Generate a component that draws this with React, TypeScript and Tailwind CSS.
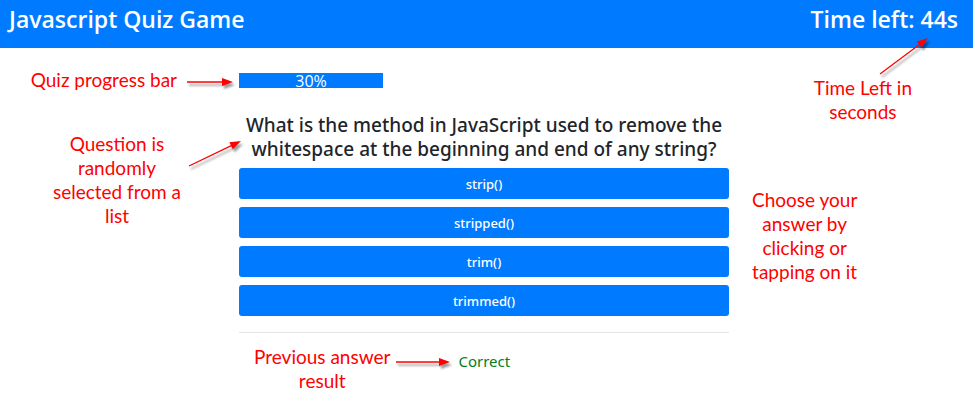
import type { ReactNode } from "react";

const answers = ["strip()", "stripped()", "trim()", "trimmed()"];
const progress = 30;

type ArrowProps = {
  className?: string;
  width: number;
  height: number;
  from: [number, number];
  to: [number, number];
};

function Arrow({ className = "", width, height, from, to }: ArrowProps) {
  const [x1, y1] = from;
  const [x2, y2] = to;
  const length = Math.hypot(x2 - x1, y2 - y1);
  const angle = (Math.atan2(y2 - y1, x2 - x1) * 180) / Math.PI;
  return (
    <svg
      aria-hidden="true"
      width={width}
      height={height}
      className={`shrink-0 overflow-visible drop-shadow-[2px_3px_1px_rgba(0,0,0,0.4)] ${className}`}
    >
      <g transform={`translate(${x1} ${y1}) rotate(${angle})`} fill="#ff0000">
        <path d={`M0 0H${length - 9}`} stroke="#ff0000" strokeWidth="1.3" />
        <path d={`M${length} 0L${length - 11} -4V4Z`} />
      </g>
    </svg>
  );
}

function Callout({ className = "", children }: { className?: string; children: ReactNode }) {
  return (
    <p
      className={`text-center font-['Lato','Carlito',sans-serif] text-[19px] leading-6 whitespace-nowrap text-[#ff0000] ${className}`}
    >
      {children}
    </p>
  );
}

export default function App() {
  return (
    <div className="min-h-screen bg-white font-['Noto_Sans','Open_Sans',sans-serif] text-[#212529]">
      <header className="flex h-12 items-start justify-between bg-[#007bff] pt-[5px] pr-[15px] pl-[9px] font-['Open_Sans',sans-serif] text-[23px] leading-[29px] font-semibold text-white">
        <h1>Javascript Quiz Game</h1>
        <p>Time left: 44s</p>
      </header>

      <div className="grid grid-cols-[239fr_490fr_244fr]">
        <aside className="flex flex-col gap-10 pt-5">
          <div className="flex items-center justify-end gap-2 pr-1.5">
            <Callout>Quiz progress bar</Callout>
            <Arrow className="mt-1" width={48} height={10} from={[2, 5]} to={[48, 5]} />
          </div>
          <div className="-mr-0.5 flex items-start justify-end gap-2">
            <Callout>
              Question is
              <br />
              randomly
              <br />
              selected from a
              <br />
              list
            </Callout>
            <Arrow className="mt-2" width={52} height={28} from={[0, 26]} to={[52, 1]} />
          </div>
        </aside>

        <main className="pt-[25px]">
          <div className="pr-2.5">
            <div
              role="progressbar"
              aria-label="Quiz progress"
              aria-valuenow={progress}
              aria-valuemin={0}
              aria-valuemax={100}
              className="h-[15px]"
            >
              <div
                className="flex h-full items-center justify-center bg-[#007bff] font-['Open_Sans',sans-serif] text-[16px] text-white"
                style={{ width: `${progress}%` }}
              >
                {progress}%
              </div>
            </div>
          </div>

          <h2 className="mt-[25px] text-center text-[19px] leading-6 font-medium">
            What is the method in JavaScript used to remove the whitespace at the beginning and end of any string?
          </h2>

          <div className="mt-[7px] flex flex-col gap-2">
            {answers.map((answer) => (
              <button
                key={answer}
                type="button"
                className="h-[31px] rounded-[3px] bg-[#007bff] text-[13px] leading-5 font-medium text-white"
              >
                {answer}
              </button>
            ))}
          </div>

          <hr className="mt-4 border-t border-[#e5e5e5]" />
          <div className="flex items-start gap-1.5 pt-3 pl-[15px]">
            <Callout>
              Previous answer
              <br />
              result
            </Callout>
            <Arrow className="mt-3" width={56} height={10} from={[0, 5]} to={[54, 5]} />
            <p className="mt-1 text-[15px] leading-6 text-[#008020]">Correct</p>
          </div>
        </main>

        <aside className="flex flex-col items-start">
          <Arrow className="-mt-3 mr-[43px] self-end" width={54} height={40} from={[4, 38]} to={[52, 2]} />
          <Callout className="mr-[61px] self-end">
            Time Left in
            <br />
            seconds
          </Callout>
          <Callout className="mt-16 ml-[23px]">
            Choose your
            <br />
            answer by
            <br />
            clicking or
            <br />
            tapping on it
          </Callout>
        </aside>
      </div>
    </div>
  );
}
